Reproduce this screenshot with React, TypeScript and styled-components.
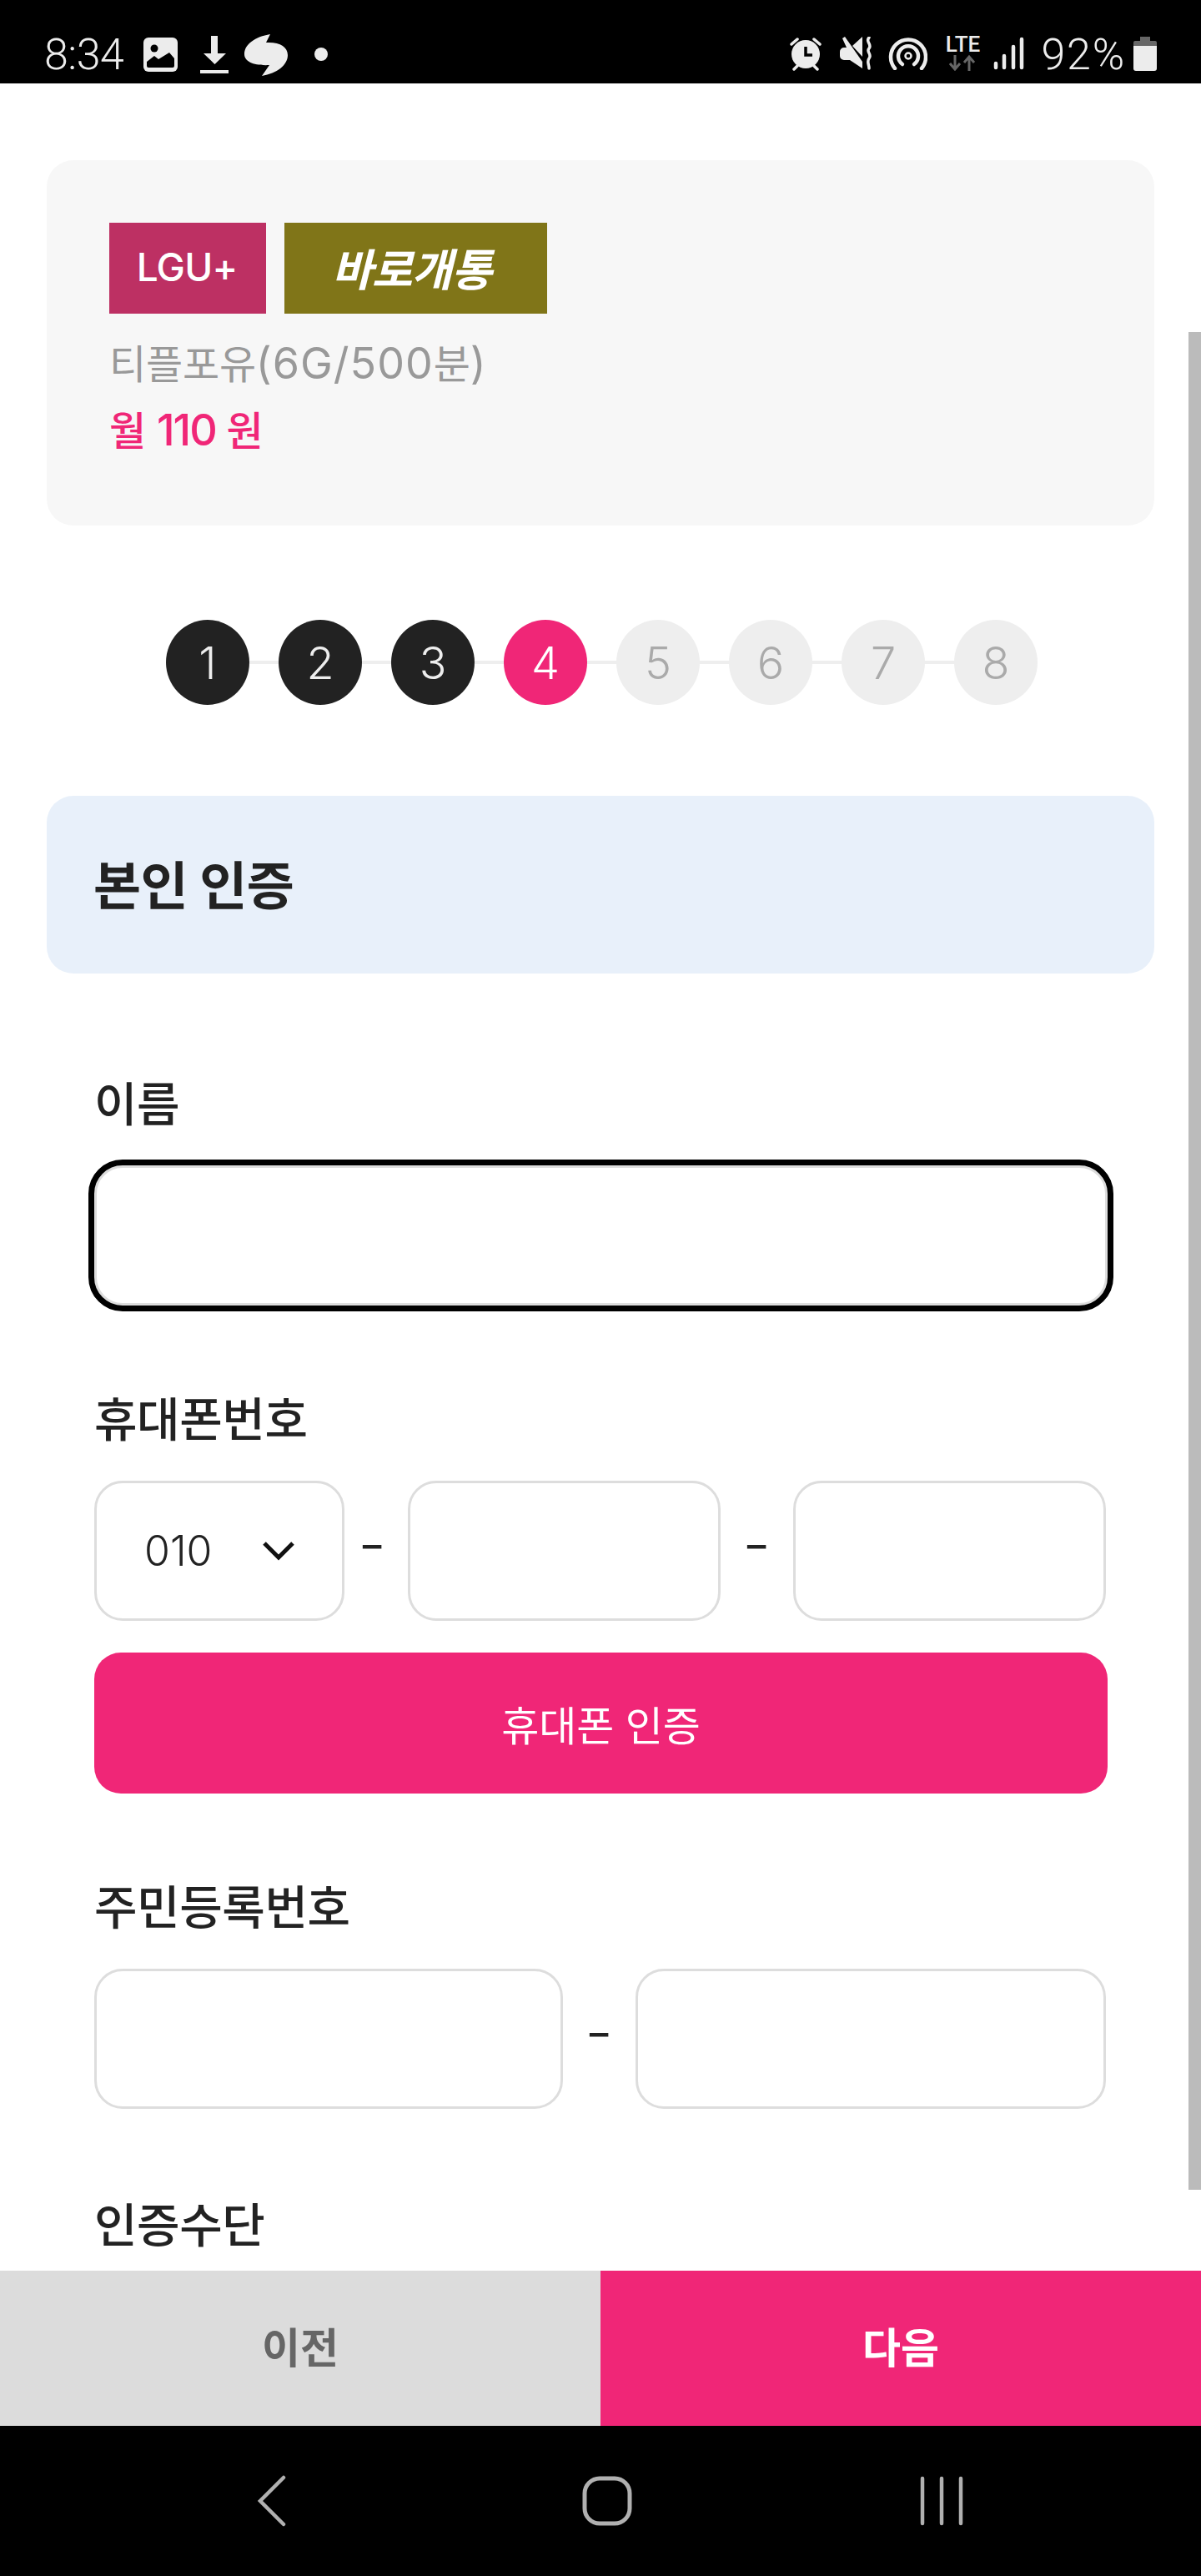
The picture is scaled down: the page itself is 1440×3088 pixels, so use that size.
import React from "react";
import styled, { createGlobalStyle } from "styled-components";

const FONT = `Inter, "Noto Sans CJK KR", "Noto Sans", sans-serif`;
const PINK = "#f02677";

const Global = createGlobalStyle`
  html, body { margin: 0; padding: 0; background: #fff; }
  * { box-sizing: border-box; }
`;

const Page = styled.div`
  position: relative;
  width: 1440px;
  height: 3088px;
  display: flex;
  flex-direction: column;
  overflow: hidden;
  background: #fff;
  font-family: ${FONT};
  color: #222;
`;

const StatusBar = styled.header`
  flex: 0 0 100px;
  background: #000;
  color: #ececec;
  display: flex;
  justify-content: space-between;
  align-items: flex-start;
  padding: 41px 53px 0 53px;
`;
const StatusGroup = styled.div`
  display: flex;
  align-items: flex-start;
`;
const StatusText = styled.span<{ $ml?: number; $ls?: number }>`
  font-family: Roboto, sans-serif;
  font-weight: 300;
  font-size: 52px;
  line-height: 50px;
  margin-left: ${(p) => p.$ml ?? 0}px;
  letter-spacing: ${(p) => p.$ls ?? -0.5}px;
`;
const StatusIcon = styled.svg<{ $ml: number; $mt: number }>`
  display: block;
  flex: none;
  margin-left: ${(p) => p.$ml}px;
  margin-top: ${(p) => p.$mt}px;
`;
const LteBlock = styled.div`
  flex: none;
  width: 44px;
  height: 44px;
  margin-left: 20px;
  margin-top: 1px;
`;
const LteText = styled.span`
  display: block;
  font-family: Roboto, sans-serif;
  font-weight: 500;
  font-size: 26px;
  line-height: 22px;
  height: 23px;
  text-align: center;
  color: #ececec;
`;

const Scroller = styled.main`
  flex: 1 1 auto;
  min-height: 0;
  overflow: hidden;
  padding: 92px 56px 0;
`;

const PlanCard = styled.section`
  height: 438px;
  background: #f7f7f7;
  border-radius: 32px;
  padding: 75px 75px 0;
`;
const TagRow = styled.div`
  display: flex;
  gap: 22px;
`;
const Tag = styled.div<{ $bg: string; $w: number }>`
  width: ${(p) => p.$w}px;
  height: 109px;
  background: ${(p) => p.$bg};
  color: #fff;
  display: flex;
  align-items: center;
  justify-content: center;
  padding-bottom: 4px;
`;
const CarrierText = styled.span`
  font-size: 46px;
  font-weight: 500;
  letter-spacing: -0.8px;
  margin-right: 2px;
`;
const TypeText = styled.span`
  font-size: 53px;
  font-weight: 700;
  font-style: italic;
  letter-spacing: -1px;
  margin-right: 10px;
`;
const PlanName = styled.div`
  margin-top: 30px;
  height: 60px;
  line-height: 60px;
  font-size: 48px;
  color: #999;
  letter-spacing: -0.2px;
`;
const PlanLatin = styled.span`
  font-size: 52px;
  letter-spacing: 1px;
`;
const PlanPrice = styled.div`
  margin-top: 20px;
  height: 60px;
  line-height: 60px;
  font-size: 48px;
  font-weight: 500;
  color: ${PINK};
`;
const PriceAmount = styled.span`
  font-size: 52px;
  letter-spacing: -2px;
`;

const Stepper = styled.ol`
  list-style: none;
  margin: 113px 0 0;
  padding: 0 0 0 3px;
  display: flex;
  justify-content: center;
  gap: 35px;
  position: relative;
`;
const StepLine = styled.li`
  position: absolute;
  left: 195px;
  width: 950px;
  top: 49px;
  height: 4px;
  background: #eee;
`;
const StepDot = styled.li<{ $state: "done" | "active" | "todo" }>`
  position: relative;
  width: 100px;
  height: 102px;
  border-radius: 50%;
  display: flex;
  align-items: center;
  justify-content: center;
  font-size: 54px;
  font-weight: 300;
  background: ${(p) => (p.$state === "done" ? "#222" : p.$state === "active" ? PINK : "#eee")};
  color: ${(p) => (p.$state === "done" ? "#eee" : p.$state === "active" ? "#fff" : "#aaa")};
`;

const SectionHead = styled.div`
  margin-top: 109px;
  height: 213px;
  background: #e8f0fa;
  border-radius: 32px;
  padding: 0 0 6px 56px;
  display: flex;
  align-items: center;
  font-size: 62px;
  font-weight: 700;
  letter-spacing: -0.5px;
  color: #222;
`;

const Form = styled.form`
  margin: 126px 0 0;
  padding: 0 56px 0 57px;
  display: flex;
  flex-direction: column;
  gap: 106px;
`;
const Field = styled.div<{ $offset?: number }>`
  display: flex;
  flex-direction: column;
  gap: 44px;
  margin-top: ${(p) => p.$offset ?? 0}px;
`;
const Label = styled.label`
  display: block;
  height: 60px;
  line-height: 62px;
  font-size: 56px;
  font-weight: 500;
  letter-spacing: -0.4px;
  color: #222;
`;
const TextInput = styled.input<{ $w?: number; $focus?: boolean }>`
  display: block;
  width: ${(p) => (p.$w ? `${p.$w}px` : "100%")};
  height: 168px;
  flex: ${(p) => (p.$w ? "none" : "1 1 auto")};
  background: #fff;
  border: 3px solid #ddd;
  border-radius: 34px;
  font-family: inherit;
  font-size: 48px;
  outline: ${(p) => (p.$focus ? "7px solid #000" : "none")};
  outline-offset: 0;
`;
const Row = styled.div`
  display: flex;
  align-items: center;
`;
const SelectBox = styled.div`
  flex: none;
  width: 300px;
  height: 168px;
  border: 3px solid #ddd;
  border-radius: 34px;
  padding: 0 56px 0 57px;
  display: flex;
  align-items: center;
  justify-content: space-between;
  font-size: 50px;
  font-weight: 300;
  color: #222;
`;
const DashSlot = styled.span<{ $w: number; $shift?: number }>`
  flex: none;
  width: ${(p) => p.$w}px;
  padding-right: ${(p) => p.$shift ?? 0}px;
  display: flex;
  justify-content: center;
  padding-bottom: 14px;
  font-size: 48px;
  line-height: 1;
  color: #222;
`;
const DashMark = styled.span`
  display: block;
  transform: scaleX(1.45);
  font-weight: 500;
`;
const PhoneStack = styled.div`
  display: flex;
  flex-direction: column;
  gap: 38px;
`;
const AuthButton = styled.button`
  width: 100%;
  height: 169px;
  border: 0;
  border-radius: 32px;
  background: ${PINK};
  color: #fff;
  font-family: inherit;
  font-size: 49px;
  font-weight: 400;
  letter-spacing: -0.1px;
`;

const BottomBar = styled.div`
  flex: 0 0 186px;
  display: flex;
`;
const BottomButton = styled.button<{ $primary?: boolean }>`
  flex: 1 1 50%;
  border: 0;
  padding: 0 0 8px;
  font-family: inherit;
  font-size: 50px;
  font-weight: 700;
  background: ${(p) => (p.$primary ? PINK : "#dcdcdc")};
  color: ${(p) => (p.$primary ? "#fff" : "#666")};
`;

const NavBar = styled.nav`
  flex: 0 0 180px;
  background: #000;
  display: flex;
  align-items: center;
  padding: 0 0 0 307px;
`;
const NavIcon = styled.svg<{ $ml: number }>`
  display: block;
  flex: none;
  margin-left: ${(p) => p.$ml}px;
`;

const ScrollThumb = styled.div`
  position: absolute;
  right: 0;
  top: 398px;
  width: 15px;
  height: 2227px;
  background: #bbb;
`;

const steps: Array<"done" | "active" | "todo"> = ["done", "done", "done", "active", "todo", "todo", "todo", "todo"];

const Dash = ({ w, shift }: { w: number; shift?: number }) => (
  <DashSlot $w={w} $shift={shift}>
    <DashMark>-</DashMark>
  </DashSlot>
);

export default function App() {
  return (
    <Page>
      <Global />
      <StatusBar>
        <StatusGroup>
          <StatusText>8:34</StatusText>
          <StatusIcon $ml={24} $mt={4} width="42" height="42" viewBox="0 0 42 42">
            <rect width="41" height="41" rx="6" fill="#ececec" />
            <circle cx="13" cy="13" r="4.500" fill="#000" />
            <path fill="#000" d="M4 29l9-7 5 4 13-8 6 7v9a2 2 0 0 1-2 2H6a2 2 0 0 1-2-2z" />
          </StatusIcon>
          <StatusIcon $ml={26} $mt={2} width="34" height="45" viewBox="0 0 34 45">
            <path fill="#ececec" d="M13 0h8v21h10L17.500 34 4 21h9zM0 41h34v4H0z" />
          </StatusIcon>
          <StatusIcon $ml={19} $mt={0} width="52" height="50" viewBox="0 0 52 50">
            <path fill="#ececec" d="M31 0l-5 10c16-1 26 5 26 15 0 12-13 22-31 25l9-13C12 38 0 33 0 24 0 12 13 3 31 0z" />
          </StatusIcon>
          <StatusIcon $ml={32} $mt={16} width="16" height="16" viewBox="0 0 16 16">
            <circle cx="8" cy="8" r="8" fill="#ececec" />
          </StatusIcon>
        </StatusGroup>
        <StatusGroup>
          <StatusIcon $ml={0} $mt={3} width="40" height="41" viewBox="0 0 40 41">
            <circle cx="20" cy="21" r="17" fill="#ececec" />
            <path d="M20 12v10h8" fill="none" stroke="#000" strokeWidth="3.500" />
            <path d="M3 9l7-6M37 9l-7-6M6 39l4-4M34 39l-4-4" stroke="#ececec" strokeWidth="3.500" strokeLinecap="round" fill="none" />
          </StatusIcon>
          <StatusIcon $ml={21} $mt={3} width="40" height="40" viewBox="0 0 40 40">
            <path fill="#ececec" d="M27 0v24L15 11zM3 2l3-2 21 30v8L12 28H5a5 5 0 0 1-5-5v-5a5 5 0 0 1 5-5h3z" />
            <path d="M35 1c-5 5 4 8 0 13-4 4 4 7 0 12-3 4 0 7 0 12" fill="none" stroke="#ececec" strokeWidth="3.500" strokeLinecap="round" />
          </StatusIcon>
          <StatusIcon $ml={18} $mt={3} width="47" height="40" viewBox="0 0 47 40">
            <path d="M8 38A21 21 0 1 1 40 38" fill="none" stroke="#ececec" strokeWidth="4.500" strokeLinecap="round" />
            <path d="M17 33A12 12 0 1 1 31 33" fill="none" stroke="#ececec" strokeWidth="4.500" strokeLinecap="round" />
            <circle cx="24" cy="23" r="3.500" fill="none" stroke="#ececec" strokeWidth="2.500" />
          </StatusIcon>
          <LteBlock>
            <LteText>LTE</LteText>
            <StatusIcon $ml={6} $mt={0} width="32" height="20" viewBox="0 0 32 20">
              <path d="M7 1v17M1 11l6 7 6-7" fill="none" stroke="#666" strokeWidth="3" />
              <path d="M24 20V3M18 10l6-7 6 7" fill="none" stroke="#666" strokeWidth="3" />
            </StatusIcon>
          </LteBlock>
          <StatusIcon $ml={15} $mt={3} width="37" height="40" viewBox="0 0 37 40">
            <path d="M3 32v5M13 23v14M24 12v25M34 3v34" stroke="#ececec" strokeWidth="4.500" strokeLinecap="round" fill="none" />
          </StatusIcon>
          <StatusText $ml={20} $ls={1.8}>92%</StatusText>
          <StatusIcon $ml={9} $mt={3} width="28" height="41" viewBox="0 0 28 41">
            <path fill="#666" d="M8 0h12v5h6a2 2 0 0 1 2 2v4H0V7a2 2 0 0 1 2-2h6z" />
            <path fill="#ececec" d="M0 11h28v27a3 3 0 0 1-3 3H3a3 3 0 0 1-3-3z" />
          </StatusIcon>
        </StatusGroup>
      </StatusBar>

      <Scroller>
        <PlanCard>
          <TagRow>
            <Tag $bg="#bd3063" $w={188}><CarrierText>LGU+</CarrierText></Tag>
            <Tag $bg="#807518" $w={315}><TypeText>바로개통</TypeText></Tag>
          </TagRow>
          <PlanName>티플포유<PlanLatin>(6G/500</PlanLatin>분<PlanLatin>)</PlanLatin></PlanName>
          <PlanPrice>월 <PriceAmount>110</PriceAmount> 원</PlanPrice>
        </PlanCard>

        <Stepper>
          <StepLine aria-hidden />
          {steps.map((s, i) => (
            <StepDot key={i} $state={s}>{i + 1}</StepDot>
          ))}
        </Stepper>

        <SectionHead>본인 인증</SectionHead>

        <Form>
          <Field>
            <Label>이름</Label>
            <TextInput $focus />
          </Field>
          <Field>
            <Label>휴대폰번호</Label>
            <PhoneStack>
              <Row>
                <SelectBox>
                  010
                  <svg width="40" height="24" viewBox="0 0 40 24">
                    <path d="M3 3l17 17L37 3" fill="none" stroke="#111" strokeWidth="5" />
                  </svg>
                </SelectBox>
                <Dash w={76} shift={10} />
                <TextInput $w={375} />
                <Dash w={87} />
                <TextInput $w={375} />
              </Row>
              <AuthButton type="button">휴대폰 인증</AuthButton>
            </PhoneStack>
          </Field>
          <Field>
            <Label>주민등록번호</Label>
            <Row>
              <TextInput $w={562} />
              <Dash w={87} />
              <TextInput $w={564} />
            </Row>
          </Field>
          <Field $offset={3}>
            <Label>인증수단</Label>
          </Field>
        </Form>
      </Scroller>

      <BottomBar>
        <BottomButton type="button">이전</BottomButton>
        <BottomButton type="button" $primary>다음</BottomButton>
      </BottomBar>

      <NavBar>
        <NavIcon $ml={0} width="36" height="62" viewBox="0 0 36 62">
          <path d="M33 3L5 31l28 28" fill="none" stroke="#b0b0b0" strokeWidth="4.500" strokeLinecap="round" />
        </NavIcon>
        <NavIcon $ml={355} width="60" height="60" viewBox="0 0 60 60">
          <rect x="3" y="3" width="54" height="54" rx="18" fill="none" stroke="#b0b0b0" strokeWidth="5" />
        </NavIcon>
        <NavIcon $ml={345} width="52" height="60" viewBox="0 0 52 60">
          <path d="M3 3v54M26 3v54M49 3v54" fill="none" stroke="#b0b0b0" strokeWidth="4.500" strokeLinecap="round" />
        </NavIcon>
      </NavBar>

      <ScrollThumb />
    </Page>
  );
}
